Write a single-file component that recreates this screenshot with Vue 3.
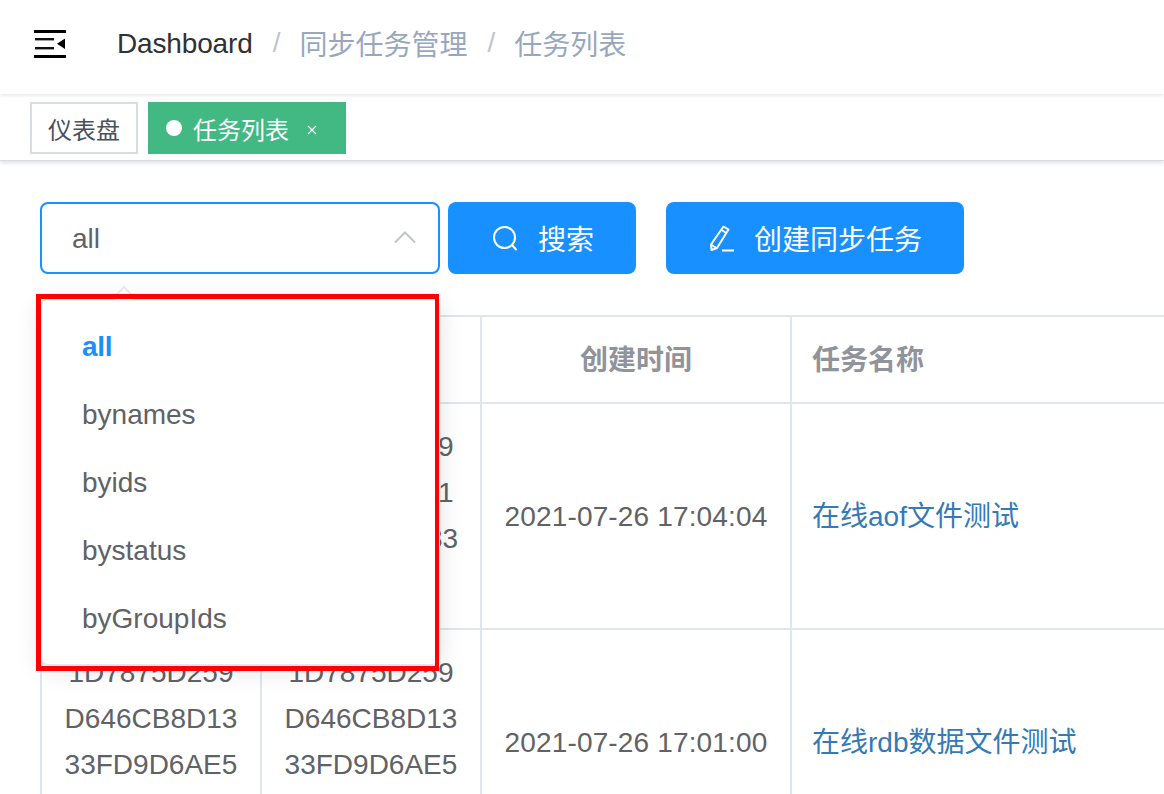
<script setup>
const options = ['all', 'bynames', 'byids', 'bystatus', 'byGroupIds']
const rows = [
  {
    lines: ['0E2B6A8719', '7A9F3D2701', 'BEC8D1E733', '5AC2'],
    time: '2021-07-26 17:04:04',
    name: '在线aof文件测试'
  },
  {
    lines: ['1D7875D259', 'D646CB8D13', '33FD9D6AE5', '8F10'],
    time: '2021-07-26 17:01:00',
    name: '在线rdb数据文件测试'
  }
]
</script>

<template>
  <div class="page">
    <header class="navbar">
      <svg class="hamburger" width="32" height="28" viewBox="0 0 32 28">
        <rect x="0" y="0" width="32" height="3" fill="#000" />
        <rect x="1" y="8" width="19" height="2.4" fill="#111" />
        <rect x="1" y="17" width="19" height="2.4" fill="#111" />
        <rect x="0" y="25" width="32" height="3" fill="#000" />
        <path d="M31 8.5V19L23 13.8Z" fill="#000" />
      </svg>
      <nav class="crumbs">
        <span class="crumb-root">Dashboard</span>
        <span class="sep">/</span>
        <span class="crumb">同步任务管理</span>
        <span class="sep">/</span>
        <span class="crumb">任务列表</span>
      </nav>
    </header>

    <div class="tags">
      <span class="tag">仪表盘</span>
      <span class="tag active">
        <i class="dot"></i>任务列表
        <svg class="close" width="10" height="10" viewBox="0 0 10 10" fill="none" stroke="#fff" stroke-width="1.1">
          <path d="M1 1L9 9M9 1L1 9" />
        </svg>
      </span>
    </div>

    <main class="content">
      <div class="filters">
        <div class="select-wrap">
          <div class="select">
            <span class="value">all</span>
            <svg width="22" height="12" viewBox="0 0 22 12" fill="none">
              <path d="M1 11.5L11 1.5L21 11.5" stroke="#c0c4cc" stroke-width="2" />
            </svg>
          </div>
          <div class="dropdown">
            <span class="arrow"></span>
            <div
              v-for="(o, i) in options"
              :key="o"
              class="option"
              :class="{ selected: i === 0 }"
            >{{ o }}</div>
          </div>
          <div class="annot"></div>
        </div>
        <button class="btn search">
          <svg width="26" height="26" viewBox="0 0 26 26" fill="none" stroke="#fff" stroke-width="2">
            <circle cx="12.5" cy="12.5" r="10.5" />
            <path d="M20 20L24 24.5" stroke-linecap="round" />
          </svg>
          <span>搜索</span>
        </button>
        <button class="btn create">
          <svg width="26" height="28" viewBox="0 0 26 28" fill="none" stroke="#fff" stroke-width="2">
            <path d="M14.5 2.5L19.5 5.5L8 24L2.5 26L2 20.5Z" stroke-linejoin="round" />
            <path d="M12.5 6L17.5 9" />
            <path d="M2.5 21L7.5 24" />
            <path d="M13 26.5H25" />
          </svg>
          <span>创建同步任务</span>
        </button>
      </div>

      <table class="grid">
        <colgroup>
          <col class="c1" />
          <col class="c2" />
          <col class="c3" />
          <col class="c4" />
        </colgroup>
        <thead>
          <tr>
            <th>任务ID</th>
            <th>源集群</th>
            <th>创建时间</th>
            <th class="left">任务名称</th>
          </tr>
        </thead>
        <tbody>
          <tr v-for="r in rows" :key="r.time">
            <td><div v-for="l in r.lines" :key="l">{{ l }}</div></td>
            <td><div v-for="l in r.lines" :key="l">{{ l }}</div></td>
            <td class="time">{{ r.time }}</td>
            <td class="left name"><a class="link">{{ r.name }}</a></td>
          </tr>
        </tbody>
      </table>
    </main>
  </div>
</template>

<style>
html, body { margin: 0; background: #fff; overflow: hidden; }
</style>

<style scoped>
.page {
  width: 1164px;
  height: 794px;
  overflow: hidden;
  background: #fff;
  font-family: "Liberation Sans", "Noto Sans CJK SC", sans-serif;
  font-size: 28px;
  color: #606266;
}
.navbar {
  height: 94px;
  display: flex;
  align-items: center;
  padding-left: 34px;
  box-shadow: 0 2px 3px rgba(0, 21, 41, 0.08);
  position: relative;
}
.hamburger { margin-top: -6px; }
.crumbs {
  margin-left: 51px;
  display: flex;
  align-items: center;
  margin-top: -8px;
}
.crumb-root { color: #303133; letter-spacing: -0.15px; padding-top: 2px; }
.crumb { color: #97a8be; }
.sep { color: #c0c4cc; margin: 0 19px 0 20px; font-weight: 400; }
.tags {
  height: 66px;
  margin-top: 1px;
  box-sizing: border-box;
  padding: 7px 0 0 30px;
  display: flex;
  gap: 10px;
  align-items: flex-start;
  border-bottom: 1px solid #d8dce5;
  box-shadow: 0 2px 4px rgba(0, 0, 0, 0.12);
}
.tag {
  height: 52px;
  box-sizing: border-box;
  border: 2px solid #d8dce5;
  padding: 0 16px;
  display: flex;
  align-items: center;
  font-size: 24px;
  color: #495060;
}
.tag.active {
  width: 198px;
  background: #42b983;
  border-color: #42b983;
  color: #fff;
}
.dot {
  width: 16px;
  height: 16px;
  border-radius: 50%;
  background: #fff;
  margin-right: 11px;
}
.close { margin-left: 18px; margin-top: 4px; }
.content { padding: 41px 0 0 40px; }
.filters { display: flex; align-items: flex-start; }
.select-wrap { position: relative; width: 400px; }
.select {
  height: 72px;
  box-sizing: border-box;
  border: 2px solid #1890ff;
  border-radius: 8px;
  padding: 0 22px 0 30px;
  display: flex;
  align-items: center;
  justify-content: space-between;
  background: #fff;
}
.value { padding-top: 2px; }
.select svg { margin-top: -2px; }
.dropdown {
  position: absolute;
  z-index: 5;
  left: 0;
  right: 0;
  top: 96px;
  height: 368px;
  box-sizing: border-box;
  padding: 13px 0 11px;
  background: #fff;
  border: 2px solid #e4e7ed;
  border-radius: 8px;
  box-shadow: 0 4px 24px rgba(0, 0, 0, 0.12);
}
.arrow {
  position: absolute;
  left: 74px;
  top: -11px;
  width: 14px;
  height: 14px;
  background: #fff;
  border-left: 2px solid #e4e7ed;
  border-top: 2px solid #e4e7ed;
  transform: rotate(45deg);
}
.option {
  height: 68px;
  line-height: 68px;
  padding-left: 40px;
  color: #606266;
}
.option.selected { color: #1890ff; font-weight: 700; letter-spacing: -0.3px; }
.annot {
  position: absolute;
  z-index: 6;
  left: -4px;
  top: 92px;
  width: 403px;
  height: 377px;
  box-sizing: border-box;
  border: 5px solid #fe0000;
  border-right-width: 4px;
  pointer-events: none;
}
.btn {
  height: 72px;
  box-sizing: border-box;
  border: 0;
  border-radius: 8px;
  background: #1890ff;
  color: #fff;
  font: inherit;
  display: flex;
  align-items: center;
  padding: 0;
}
.btn.search { width: 188px; margin-left: 8px; padding-left: 44px; gap: 20px; }
.btn.create { width: 298px; margin-left: 30px; padding-left: 43px; gap: 19px; }
.grid {
  margin-top: 41px;
  width: 1400px;
  table-layout: fixed;
  border-collapse: separate;
  border-spacing: 0;
  border-top: 2px solid #dfe6ec;
  border-left: 2px solid #dfe6ec;
}
.c1, .c2 { width: 220px; }
.c3 { width: 310px; }
.grid th, .grid td {
  border-right: 2px solid #dfe6ec;
  border-bottom: 2px solid #dfe6ec;
  text-align: center;
  padding: 0 20px;
  font-size: 28px;
  line-height: 46px;
  box-sizing: border-box;
}
.grid th { height: 87px; padding-top: 3px; color: #909399; font-weight: 700; }
.grid td { height: 226px; color: #606266; }
.grid .time { padding-top: 1px; padding-left: 0; padding-right: 0; letter-spacing: 0.15px; }
.grid .name { padding-top: 1px; }
.grid .left { text-align: left; }
.link { color: #337ab7; }
</style>
